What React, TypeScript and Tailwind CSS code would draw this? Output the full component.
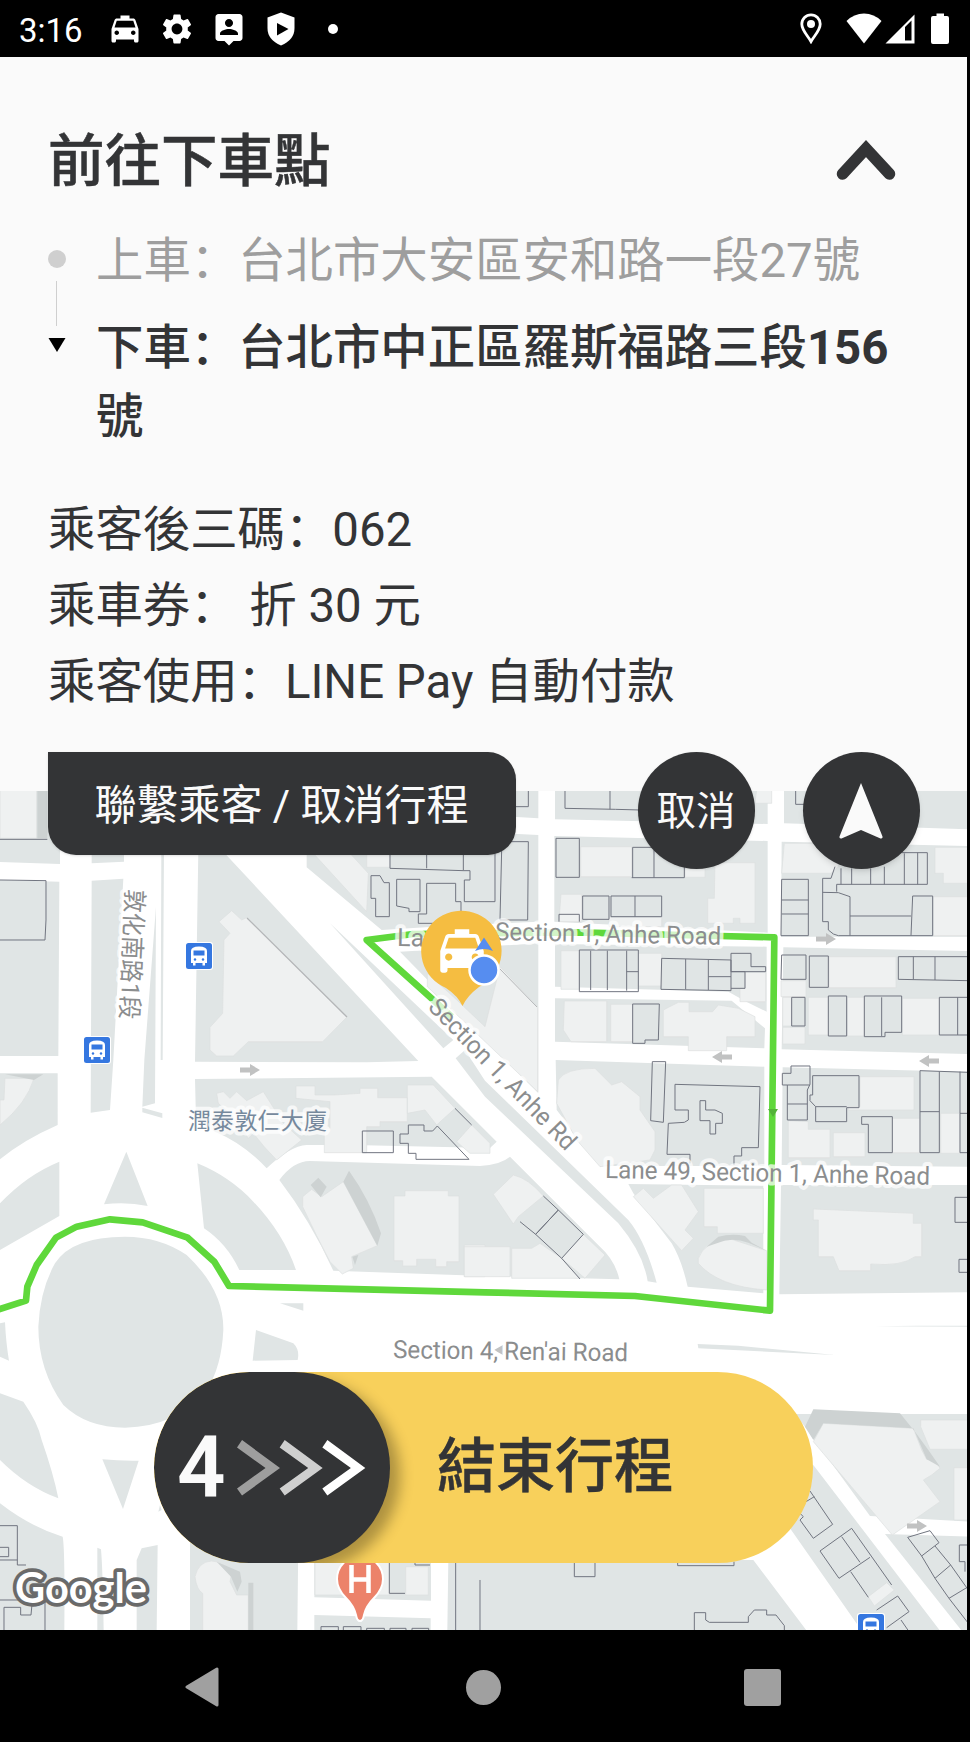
import { MdLocalTaxi, MdSettings } from "react-icons/md";

type Tile = {
  x: number;
  y: number;
  land: string;
  light: string;
  shade: string;
  lines: string;
};

// Map tiles, every tile is drawn at 3x and scaled down to its origin
const tiles: Tile[] = [
  {
    x: 0,
    y: 740,
    land: "M0 150H180V372L0 366ZM275 150H372V365L275 370ZM0 420L178 425L175 948H0ZM275 422L370 416L340 960L330 1110L272 1118ZM468 500L465 1090L427 1100L433 960ZM595 330H665L1255 963L1100 967L585 965ZM920 270V382L1145 570L1300 560L1615 545V285L1300 270ZM1200 635L1615 610V1060ZM990 550L1360 900L1330 925ZM484 330H492L488 960H482Z",
    light: "M0 150H110V295H0ZM695 512L725 540L740 533L1040 832L968 905H745L700 948H650L630 930V862L668 820L672 600L690 580L657 545ZM940 340H1050L1105 400L1100 515ZM1100 340H1170V382H1100ZM1282 700L1360 770L1455 860L1500 680L1613 800V1055L1282 740Z",
    shade: "M112 150H142V295H112Z",
    lines: "M0 298H142M0 420L138 422V540L135 600H0M1170 340V385L1390 392V340M1280 340V385M1113 407H1140L1152 428H1168V530H1127V475H1113ZM1190 418H1260V515H1227V505L1190 498ZM1280 430H1367V485H1383V550H1255V522H1280ZM1390 392H1410V420H1393V485H1455",
  },
  {
    x: 485,
    y: 740,
    land: "M60 150H160V235L0 225V150ZM210 150H848V252L210 238ZM208 288L848 303V578L208 545ZM210 612L845 620V815Q790 790 730 755L210 740ZM210 775L740 782L840 865L838 925L210 905ZM897 150H1450V268L897 250ZM890 305L1450 318V590H888ZM895 622L1450 633V942L890 928Z",
    light: "M287 320H440V410H287ZM600 385H660V412H600ZM690 368H810V550H765V535H745V550H668V475H688ZM228 463H290V545H222ZM372 532H530V560H372ZM228 632H283V748H228ZM460 640H530V738H460ZM780 697H842V785H765V745H780ZM238 783H365V905H258L235 870ZM377 793H443V905H377ZM535 810L580 787H612V815H683L700 795L760 805L810 830V890H725V932H610V890H535ZM815 150H860V190H810ZM898 310H1060V380L1038 400H890ZM1350 322H1450V430H1375V400H1350ZM1345 470H1450V587H1345ZM1032 650H1233V743H1032ZM888 722H963V770H888ZM893 862H960V912H893ZM970 772H1030V885H970ZM1087 772H1138V888H1087ZM1252 775H1363V885H1252ZM893 772H920V858H893Z",
    shade: "",
    lines: "M0 485H30V340M50 330L45 540H128L130 305H80M90 200H130V150M240 150V205L392 208L465 210M375 150V208M213 295H283V412H213ZM440 413H598V370M500 322H443V413M507 330V413M293 468H372V538H293ZM378 468H530V530H378ZM450 468V530M222 545V523H283V545M283 630H460V755H283ZM317 632V750M367 632V750M425 632V752M425 695H460M530 655L738 660V752L528 748ZM602 657V748M670 660V750M670 710H738M738 640H798V680H842V695H738ZM738 695H780V745H738M443 792H523L520 900H480V910H443ZM932 150V193H960M890 418H970V587H888ZM890 480H970M890 522H970M1050 380L1038 415H1013V545H1030V570L1045 582L1060 587H1278L1283 468H1343V587H1278M1013 457L1060 458L1095 470V587M1095 528H1278M1055 455V433H1327V338H1250M1068 385V433M1100 385V433M1157 385V433M1198 380V433M1258 340V433M1298 338V433M890 645H963V718H888ZM973 648H1030V742H973ZM1450 650H1240V718L1450 722M1285 650V718M1350 650V720M920 772H960V858H920ZM1030 768H1085V888H1030ZM1138 768H1250V877H1200V890H1138ZM1190 772V888M1450 772H1363V885H1450M1418 772V885",
  },
  {
    x: 0,
    y: 1060,
    land: "M0 40H173V195Q70 240 0 298ZM0 430Q80 345 178 305V468L0 570ZM427 143L487 160V174L427 157ZM379 275L443 438Q380 425 312 433ZM592 310Q690 350 760 425Q850 520 888 630H718Q680 550 612 505ZM585 57L1295 50L1490 245L1470 264L1060 255H920Q870 258 800 325Q730 250 645 215L588 180ZM838 360Q880 303 930 303L1440 318Q1500 315 1530 290L1800 560Q1845 600 1858 658L1455 648L1000 632Q930 480 838 360ZM375 530Q480 530 560 585Q672 690 670 810Q665 920 620 990Q530 1100 375 1103Q260 1103 190 1035Q115 930 115 800Q120 690 165 610Q215 530 375 530ZM768 810L880 850Q900 870 893 900L758 902ZM840 730H910V752ZM0 790L15 787Q18 850 27 902L0 890Z",
    light: "M0 120H12L15 55H102Q80 130 0 195ZM650 100L670 95L690 115L710 95L740 122L790 95L850 190L905 240L830 300Q790 260 760 220L745 235L700 170L655 130ZM888 78H945V105H1005L1080 100V85H1133V113H1222V185H1140V200H1100V278H973V205H990V125L888 115ZM1222 75H1300L1365 145L1310 195L1275 150L1222 160ZM1370 245L1415 195L1470 250V280H1410ZM908 410L935 388L965 410L1030 365L1132 557L1055 590L1060 625L1027 642L990 605Q950 530 908 440ZM1215 392H1345V408H1377V605H1340V620H1307V598H1250V618H1208V602H1182V408H1215ZM1393 555H1455V650H1393Z",
    shade: "M15 43H130L102 60ZM1047 332Q1110 420 1143 520L1132 557L1030 365ZM932 375L955 353L980 380L962 412ZM1057 590L1075 585L1065 615Z",
    lines: "M1087 213H1180V278H1087ZM1225 195H1272V213H1298L1312 198L1407 298H1248V280H1225V250H1200V222H1225ZM1365 145L1415 195",
  },
  {
    x: 485,
    y: 1060,
    land: "M-60 -30L0 62L430 480Q480 540 515 668L488 664Q475 580 400 490L0 110L-88 -5ZM212 0L838 20V318H345L215 150ZM430 372L835 377V700L608 680Q590 600 560 550L445 400ZM893 22L1450 35V320L890 315ZM888 375H1450V697L883 703ZM638 852L760 857L1050 885L640 865ZM530 845L558 850ZM1170 799L1300 797H1450V800Z",
    light: "M220 60Q240 25 330 25L380 75L410 65L465 110V150L510 215V270L495 300L345 320L275 240L215 130ZM25 403L85 345Q130 355 175 408L100 470L85 492ZM295 523L360 585L300 655L230 595ZM445 410L475 385L505 415L560 375H590L640 455L600 510L625 535L590 572ZM657 385H835V520H697V500H657ZM640 595Q660 540 740 538L845 572V690Q700 680 640 610ZM985 447L1285 460V490H1310V590H1290Q1250 620 1157 612V632H1062L1045 590H1000V480H985ZM1125 50H1287V150H1090V140H1125ZM910 182L970 185V208H1035V293H910ZM1045 218H1140V290H1045ZM1222 175H1305V278H1222ZM1367 160H1425V280H1367ZM-62 560H75V650H-62ZM80 565H140L165 550L230 595L285 655H80Z",
    shade: "M665 560L700 530Q740 520 780 528L800 548L845 572L790 548Q740 530 700 548Z",
    lines: "M502 5H542L535 187L497 182ZM747 315V288H770V263H820L825 80L570 73V150H610V180L598 187L550 190L546 283H615V310M645 122H662V150H690L712 160V190H692V222H675V182H645ZM220 450L295 523L230 595L152 523ZM175 408L220 450L152 523L105 485M230 595L285 657M918 18H975V73L967 90V180H907V75H892V40H918ZM907 75H975M907 132H967M983 47H1122V143H1085V185H992V140L975 122V105H983ZM992 140H1085M1130 170H1222V278H1150V193H1130ZM1450 37L1305 32V278H1363V35M1305 155H1363M1425 35V160H1450M1425 160V278H1450M1450 412H1410V487H1450M1450 598H1422V637H1450",
  },
  {
    x: 0,
    y: 1360,
    land: "M0 100L70 125Q115 190 125 240Q160 340 175 415Q80 380 0 300ZM0 430Q90 500 188 530Q195 560 193 812H0ZM307 298Q360 303 416 302L369 447ZM292 563L303 568Q308 620 311 812H292ZM425 565L473 555L470 812H410V600ZM480 435L475 455L485 450ZM570 540H895L892 812H570ZM943 600H1293V722L943 712ZM943 765L1292 775V812H943ZM1345 600H1460V812H1342Z",
    light: "M585 650Q595 605 635 603Q680 605 693 650L690 665L710 705H745V812H608V700Q590 690 585 650ZM945 600H1168V705H945ZM1217 620H1285V705H1217Z",
    shade: "M650 605L720 635L725 665L712 695L693 650ZM745 668H760V812H745Z",
    lines: "M0 497H52V615H78M0 562H26V590H0M0 600H52M0 720H135V812M12 812V742H62V765H93L100 690M963 812V800H1015V812M1030 812V800H1083V812M1100 812V805H1153V812M1170 812V805H1218V812M1236 812V805H1286V812M1168 600V700H1215M1245 600V615H1290M1367 600V812M1440 660V812",
  },
  {
    x: 485,
    y: 1360,
    land: "M0 600H805L965 812H0ZM915 505L985 315L1365 812H1130ZM930 162H1450V485L1155 468L960 200ZM1200 522L1450 530V812H1430Z",
    light: "M1015 190L1285 205L1310 270L1325 298L1350 300L1365 325L1340 345L1315 360L1365 425L1222 525L985 245ZM1307 180H1450V268H1335L1307 200ZM1407 323H1450V480H1407ZM1150 710L1205 668L1228 690L1168 738Z",
    shade: "M985 148L1245 160L1290 215L1330 270L1365 320L1325 298L1285 205L1015 190L985 240L960 200Z",
    lines: "M268 605V650H330V605M578 605V617H747V605M628 812V758H662V780L673 787H790V770L808 750H845V765H873L898 797V812M975 393L1043 493L985 535L945 480L955 470L945 460M963 425L988 410M1005 573L1100 505L1220 675M1005 573L1062 655L1155 592M1070 530L1125 607M1097 635L1150 712M1175 750L1238 708L1272 755L1205 803M1248 780L1270 812M1268 532L1335 512L1362 548L1310 588ZM1350 558L1397 615L1350 655L1310 588M1350 655L1392 715L1450 680M1397 615L1450 690M1392 715L1450 790M1450 555H1423V605H1440V635",
  },
];

const busStops = [
  { x: 186, y: 943 },
  { x: 84, y: 1037 },
  { x: 858, y: 1614 },
];

const arrows = [
  { x: 250, y: 1070, flip: false },
  { x: 826, y: 939, flip: false },
  { x: 722, y: 1057, flip: true },
  { x: 929, y: 1061, flip: true },
  { x: 917, y: 1526, flip: false },
];

function BusStop({ x, y }: { x: number; y: number }) {
  return (
    <g transform={`translate(${x} ${y})`}>
      <rect x="-1" y="-1" width="28" height="28" rx="3" fill="#fff" />
      <rect width="26" height="26" rx="2.5" fill="#3577e0" />
      <path d="M5 20V8Q5 3.500 13 3.500T21 8V20H19V22.500H16.500V20H9.500V22.500H7V20Z" fill="#fff" />
      <rect x="7.500" y="7.500" width="11" height="5" fill="#3577e0" />
      <circle cx="9" cy="16.500" r="1.200" fill="#3577e0" />
      <circle cx="17" cy="16.500" r="1.200" fill="#3577e0" />
    </g>
  );
}

function CityMap() {
  return (
    <svg viewBox="0 791 967 839" className="block h-[839px] w-[967px] bg-white">
      {tiles.map((t) => (
        <path key={`${t.x}-${t.y}`} transform={`translate(${t.x} ${t.y}) scale(0.33333)`} d={t.land} fill="#e0e5e5" />
      ))}
      {tiles.map((t) => (
        <g key={`${t.x}-${t.y}`} transform={`translate(${t.x} ${t.y}) scale(0.33333)`}>
          <path d={t.light} fill="#eff1f1" stroke="#dcdfe0" strokeWidth="2" />
          <path d={t.shade} fill="#cdd2d2" />
          <path d={t.lines} fill="none" stroke="#70747f" strokeWidth="3" />
        </g>
      ))}
      <path d="M247 918L347 1017" stroke="#b4b6b8" strokeWidth="1.200" />
      <path d="M500 969L537 1007" stroke="#b4b6b8" />

      {arrows.map((a) => (
        <path
          key={`${a.x}-${a.y}`}
          transform={`translate(${a.x} ${a.y}) scale(${a.flip ? -1 : 1} 1)`}
          d="M-10 -2.500H0V-6L10 0L0 6V2.500H-10Z"
          fill="#c1c2c2"
        />
      ))}
      <path d="M503 1345V1355L494 1350Z" fill="#c1c2c2" />

      {/* Route */}
      <path
        transform="translate(0 1060) scale(0.33333)"
        d="M-10 750L78 722L82 680L110 615L168 533L230 500L330 478L428 487L563 533L643 605L687 678L1455 697L1905 708L2310 752L2323 -368L2160 -372L1730 -383L1240 -378L1100 -360L1300 -180L1355 -130"
        fill="none"
        stroke="#5fd83b"
        strokeWidth="20"
        strokeLinejoin="round"
      />
      <path d="M768 1109H778L773 1117Z" fill="#53b338" />

      <g
        fill="#8b8d8e"
        stroke="#fff"
        strokeOpacity="0.72"
        strokeWidth="8"
        strokeLinejoin="round"
        paintOrder="stroke"
        fontSize="25"
        className="font-[Roboto,'Noto_Sans_CJK_SC',sans-serif]"
      >
        <text x="397" y="946" transform="rotate(1 397 946)">La</text>
        <text x="495" y="940" textLength="226" lengthAdjust="spacingAndGlyphs" transform="rotate(1.200 495 940)">
          Section 1, Anhe Road
        </text>
        <text x="605" y="1178" textLength="325" lengthAdjust="spacingAndGlyphs" transform="rotate(1.200 605 1178)">
          Lane 49, Section 1, Anhe Road
        </text>
        <text x="393" y="1358" textLength="235" lengthAdjust="spacingAndGlyphs" transform="rotate(0.800 393 1358)">
          Section 4, Ren'ai Road
        </text>
        <text x="427" y="1008" textLength="200" lengthAdjust="spacingAndGlyphs" transform="rotate(46 427 1008)">
          Section 1, Anhe Rd
        </text>
        <text x="126" y="889" textLength="130" lengthAdjust="spacingAndGlyphs" transform="rotate(92.500 126 889)">
          敦化南路1段
        </text>
        <text x="188" y="1129" fontSize="23" textLength="139" fill="#76899d">
          潤泰敦仁大廈
        </text>
      </g>

      {busStops.map((b) => (
        <BusStop key={b.x} x={b.x} y={b.y} />
      ))}

      {/* Hospital */}
      <path d="M360 1621Q357 1621 356 1615Q354 1606 346 1598Q337 1589 337 1579A23 23 0 0 1 383 1579Q383 1589 374 1598Q366 1606 364 1615Q363 1621 360 1621Z" fill="#ec826a" stroke="#fff" strokeWidth="2" />
      <path d="M351.500 1565V1593M368.500 1565V1593M351 1579.500H369" fill="none" stroke="#fff" strokeWidth="4.500" />

      {/* Driver */}
      <path d="M462.500 1006Q458 996 446 988A40.200 40.200 0 1 1 479 987Q467 996 462.500 1006Z" fill="#f5bd41" />
      <MdLocalTaxi x="433" y="922" size="58" color="#fff" />
      <path d="M475 951L484 937.500L493 951Q484 947 475 951Z" fill="#568df0" />
      <circle cx="484" cy="970" r="14.500" fill="#568df0" stroke="#fff" strokeWidth="2.500" />

      <text
        x="15"
        y="1603"
        fontSize="42"
        textLength="132"
        lengthAdjust="spacingAndGlyphs"
        fill="#fff"
        stroke="#6a6a6a"
        strokeWidth="7.500"
        strokeLinejoin="round"
        paintOrder="stroke"
        className="font-[Lato,sans-serif] font-bold"
      >
        Google
      </text>
    </svg>
  );
}

function StatusBar() {
  return (
    <div className="flex h-[57px] w-full shrink-0 items-center bg-black pl-[19px] text-white">
      <span className="w-[88px] pt-[3px] text-[33px] leading-none">3:16</span>
      <div className="flex items-center gap-4">
        <MdLocalTaxi size={36} />
        <MdSettings size={36} />
        <svg viewBox="0 0 24 24" className="size-9">
          <path
            d="M19 2H5c-1.110 0-2 .9-2 2v14c0 1.100.89 2 2 2h4l3 3 3-3h4c1.100 0 2-.9 2-2V4c0-1.100-.9-2-2-2zm-7 3.300c1.490 0 2.700 1.210 2.700 2.700s-1.210 2.700-2.700 2.700-2.700-1.210-2.700-2.700 1.210-2.700 2.700-2.700zM18 16H6v-.9c0-2 4-3.100 6-3.100s6 1.100 6 3.100v.9z"
            fill="#fff"
          />
        </svg>
        <svg viewBox="0 0 36 36" className="size-9">
          <path d="M18 1.500L31.500 6.500V17Q31.500 29 18 34.500Q4.500 29 4.500 17V6.500Z" fill="#fff" />
          <path d="M14 12L25.500 18L14 24.500Z" />
        </svg>
      </div>
      <span className="ml-[29px] size-[10px] rounded-full bg-white" />
      <div className="mr-[21px] ml-auto flex items-center">
        <svg viewBox="0 0 22 31" className="mr-6 h-[31px] w-[22px]">
          <path d="M11 1.800A9.200 9.200 0 0 0 1.800 11C1.800 17.500 8 23 11 28.500C14 23 20.200 17.500 20.200 11A9.200 9.200 0 0 0 11 1.800Z" fill="none" stroke="#fff" strokeWidth="2.800" />
          <circle cx="11" cy="11" r="4" fill="#fff" />
        </svg>
        <svg viewBox="0 0 36 31" className="mr-[3px] h-[31px] w-9">
          <path d="M18 30.500L0.500 8Q8 0.500 18 0.500T35.500 8Z" fill="#fff" />
        </svg>
        <svg viewBox="0 0 30 30" className="mr-4 size-[30px]">
          <path d="M0.500 29.500L29.500 0.500V29.500ZM20 13V26.500H26.500V6.500Z" fill="#fff" fillRule="evenodd" />
        </svg>
        <svg viewBox="0 0 18 31" className="h-[31px] w-[18px]">
          <path d="M5.500 0.500H13V3H16Q18 3 18 5V29Q18 31 16 31H2Q0 31 0 29V5Q0 3 2 3H5.500Z" fill="#fff" />
        </svg>
      </div>
    </div>
  );
}

function TripPanel() {
  return (
    <section className="relative z-10 flex h-[734px] shrink-0 flex-col bg-[#fafafa] pl-12 text-[#333436]">
      <header className="mt-[61px] flex h-[84px] items-center justify-between pr-[71px]">
        <h1 className="pt-[5px] text-[56.500px] leading-none font-medium [-webkit-text-stroke:0.5px]">前往下車點</h1>
        <svg viewBox="0 0 60 40" className="h-10 w-[60px]">
          <path d="M6.500 34L30 8.500L53.500 34" fill="none" stroke="#333436" strokeWidth="11.500" strokeLinecap="round" />
        </svg>
      </header>

      <div className="flex text-[47.400px]">
        <div className="flex w-12 flex-col pt-[48px]">
          <span className="size-[18px] rounded-full bg-[#cfcfcf]" />
          <span className="mt-[13px] ml-2 h-[45px] w-px bg-[#cfcfcf]" />
          <svg viewBox="0 0 18 14" className="mt-3 h-[14px] w-[18px]">
            <path d="M0.500 0H17.500L9 14Z" />
          </svg>
        </div>
        <div>
          <p className="mt-6 h-[70px] leading-[70px] text-[#9e9e9e]">上車：台北市大安區安和路一段27號</p>
          <p className="mt-[18px] h-[138px] w-[810px] leading-[69px] font-medium">
            下車：台北市中正區羅斯福路三段<span className="font-bold">156</span>號
          </p>
        </div>
      </div>

      <div className="mt-10 text-[47.400px] leading-[76px] whitespace-pre">
        <p>乘客後三碼：062</p>
        <p>乘車券： 折 30 元</p>
        <p>乘客使用：LINE Pay 自動付款</p>
      </div>

      {/* Buttons hang over the map */}
      <div className="mt-auto flex h-[39px] items-start text-[#fafafa]">
        <button className="h-[103px] w-[468px] shrink-0 rounded-[28px] rounded-tl-none bg-[#333436] pt-1 pr-px text-[42px] shadow">
          聯繫乘客 / 取消行程
        </button>
        <button className="ml-[122px] size-[117px] shrink-0 rounded-full bg-[#333436] pt-[3px] pr-px text-[39.500px] shadow">取消</button>
        <button className="ml-12 flex size-[117px] shrink-0 items-center justify-center rounded-full bg-[#333436] pr-px shadow-md">
          <svg viewBox="0 0 46 58" className="h-[58px] w-[46px]">
            <path d="M23 1L44.500 54.500Q45 57 42.500 56.500L23 48L3.500 56.500Q1 57 1.500 54.500Z" fill="#fafafa" />
          </svg>
        </button>
      </div>
    </section>
  );
}

function SlideToFinish() {
  return (
    <div className="absolute top-[581px] left-[154px] flex h-[191px] w-[659px] items-center overflow-hidden rounded-full bg-[#f8d05b]">
      <div className="flex h-full w-[236px] shrink-0 items-center rounded-full bg-[#333436] pl-[23px] shadow-[10px_8px_14px_rgba(0,0,0,0.3)]">
        <span className="w-[60px] text-[85px] leading-none font-semibold text-[#fafafa]">4</span>
        <svg viewBox="0 0 384 166" className="h-14 w-[129px]">
          <path d="M15 0L128 83L15 165L0 144L85 83L0 22Z" fill="#9e9e9e" />
          <path d="M142 0L255 83L142 165L127 144L212 83L127 22Z" fill="#cfcfcf" />
          <path d="M269 0L382 83L269 165L254 144L339 83L254 22Z" fill="#fff" />
        </svg>
      </div>
      <span className="ml-[47px] pb-[3px] text-[59px] leading-none font-medium text-[#333436] [-webkit-text-stroke:0.5px]">結束行程</span>
    </div>
  );
}

function NavigationBar() {
  return (
    <nav className="flex h-28 items-center bg-black pt-0.5 pl-[185px]">
      <svg viewBox="0 0 34 40" className="h-10 w-[34px]">
        <path d="M2 20L32 2V38Z" fill="#a0a0a0" stroke="#a0a0a0" strokeWidth="3" strokeLinejoin="round" />
      </svg>
      <span className="ml-[247px] size-[35px] rounded-full bg-[#a0a0a0]" />
      <span className="ml-[243px] size-[37px] rounded-[3px] bg-[#a0a0a0]" />
    </nav>
  );
}

export default function App() {
  return (
    <div className="flex h-[1742px] w-[970px] flex-col overflow-hidden bg-black font-[Roboto,'Noto_Sans_CJK_SC',sans-serif]">
      <StatusBar />
      <main className="w-[967px]">
        <TripPanel />
        <div className="relative h-[839px]">
          <CityMap />
          <SlideToFinish />
        </div>
      </main>
      <NavigationBar />
    </div>
  );
}
